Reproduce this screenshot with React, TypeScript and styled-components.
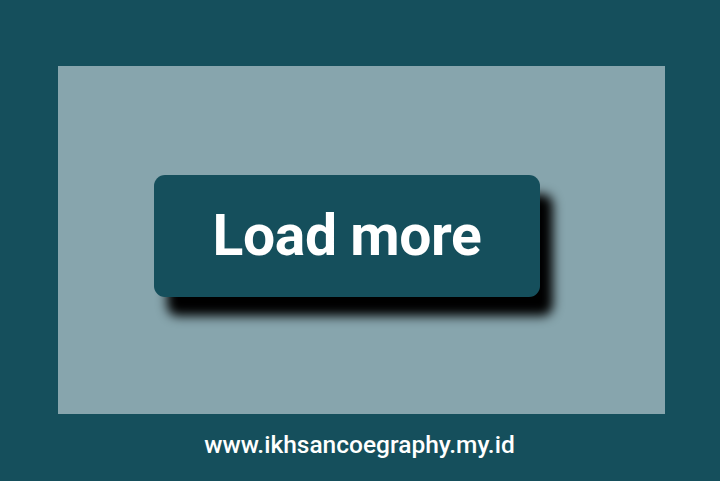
import React from 'react';
import styled, { createGlobalStyle } from 'styled-components';

const GlobalStyle = createGlobalStyle`
  html, body {
    margin: 0;
    padding: 0;
    background: #154f5c;
  }
  body {
    font-family: Roboto, 'Liberation Sans', sans-serif;
  }
`;

const Page = styled.div`
  width: 720px;
  height: 481px;
  box-sizing: border-box;
  padding: 66px 55px 0 58px;
  display: flex;
  flex-direction: column;
  background: #154f5c;
`;

const Stage = styled.div`
  height: 348px;
  box-sizing: border-box;
  padding: 109px 0 0 96px;
  display: flex;
  align-items: flex-start;
  background: #87a5ad;
`;

const Button = styled.button`
  width: 386px;
  height: 122px;
  border: none;
  border-radius: 11px;
  background: #154f5c;
  color: #fff;
  font-family: Roboto, 'Liberation Sans', sans-serif;
  font-weight: 700;
  font-size: 57px;
  letter-spacing: -0.4px;
  padding: 0 0 2px 0;
  box-shadow: 13px 19px 11px #000;
  cursor: pointer;
`;

const Footer = styled.div`
  margin-left: -4px;
  padding-top: 16px;
  text-align: center;
  color: #fff;
  font-size: 24.5px;
  font-weight: 500;
`;

export default function App() {
  return (
    <>
      <GlobalStyle />
      <Page>
        <Stage>
          <Button>Load more</Button>
        </Stage>
        <Footer>www.ikhsancoegraphy.my.id</Footer>
      </Page>
    </>
  );
}
